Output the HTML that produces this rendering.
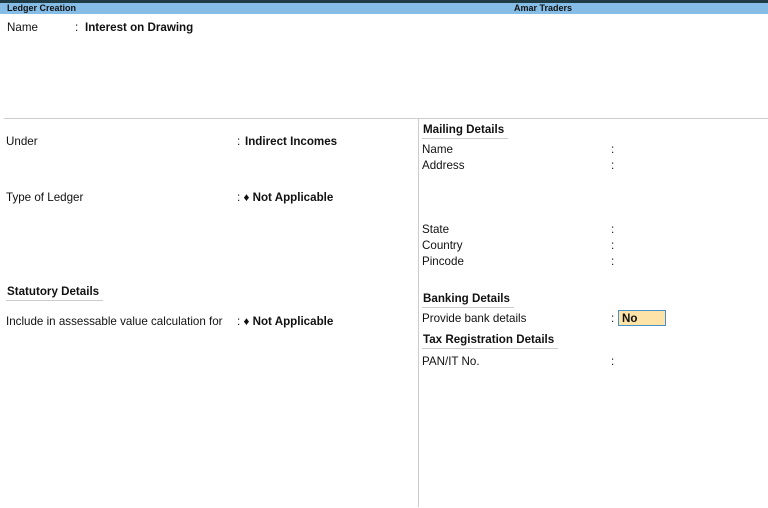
<!DOCTYPE html>
<html><head><style>
body{margin:0;width:768px;height:507px;background:#fff;position:relative;overflow:hidden;font-family:"Liberation Sans",Arial,sans-serif;font-size:11.6px;color:#111}
.a{position:absolute;white-space:nowrap;line-height:14px}
b{font-weight:bold}
.h{font-weight:bold;border-bottom:1px solid #ccc;padding:0 4px 1px 1px}
#c{position:absolute;left:0;top:1px;width:768px;height:507px}
</style></head><body>
<div class="a" style="left:0;top:0;width:768px;height:3px;background:#1f3b46"></div>
<div class="a" style="left:0;top:3px;width:768px;height:11px;background:#86bde6"></div>
<div class="a" style="left:7px;top:3px;font-size:9px;font-weight:bold;line-height:11px">Ledger Creation</div>
<div class="a" style="left:514px;top:3px;font-size:9px;font-weight:bold;line-height:11px">Amar Traders</div>
<div class="a" style="left:4px;top:118px;width:764px;height:1px;background:#ccc"></div>
<div class="a" style="left:418px;top:118px;width:1px;height:389px;background:#ccc"></div>
<div id="c">
<div class="a" style="left:7px;top:20px">Name</div>
<div class="a" style="left:75px;top:20px">:</div>
<div class="a" style="left:85px;top:20px"><b>Interest on Drawing</b></div>

<div class="a" style="left:6px;top:134px">Under</div>
<div class="a" style="left:237px;top:134px">:</div>
<div class="a" style="left:245px;top:134px"><b>Indirect Incomes</b></div>
<div class="a" style="left:6px;top:190px">Type of Ledger</div>
<div class="a" style="left:237px;top:190px">: <b>♦ Not Applicable</b></div>
<div class="a h" style="left:6px;top:284px">Statutory Details</div>
<div class="a" style="left:6px;top:314px">Include in assessable value calculation for</div>
<div class="a" style="left:237px;top:314px">: <b>♦ Not Applicable</b></div>

<div class="a h" style="left:422px;top:122px">Mailing Details</div>
<div class="a" style="left:422px;top:142px">Name</div>
<div class="a" style="left:422px;top:158px">Address</div>
<div class="a" style="left:422px;top:222px">State</div>
<div class="a" style="left:422px;top:238px">Country</div>
<div class="a" style="left:422px;top:254px">Pincode</div>
<div class="a" style="left:611px;top:142px">:</div>
<div class="a" style="left:611px;top:158px">:</div>
<div class="a" style="left:611px;top:222px">:</div>
<div class="a" style="left:611px;top:238px">:</div>
<div class="a" style="left:611px;top:254px">:</div>
<div class="a h" style="left:422px;top:291px">Banking Details</div>
<div class="a" style="left:422px;top:311px">Provide bank details</div>
<div class="a" style="left:611px;top:311px">:</div>
<div class="a" style="left:618px;top:309px;width:48px;height:16px;background:#fde3a7;border:1px solid #4a90c8;box-sizing:border-box"></div>
<div class="a" style="left:622px;top:311px"><b>No</b></div>
<div class="a h" style="left:422px;top:332px">Tax Registration Details</div>
<div class="a" style="left:422px;top:354px">PAN/IT No.</div>
<div class="a" style="left:611px;top:354px">:</div>
</div>
</body></html>
